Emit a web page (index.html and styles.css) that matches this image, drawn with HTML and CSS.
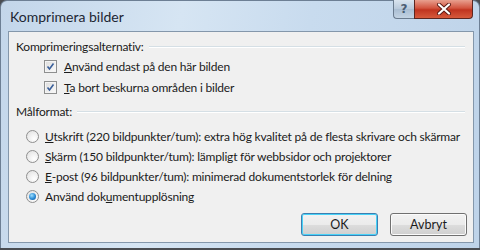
FILE: index.html
```html
<!DOCTYPE html>
<html lang="sv">
<head>
  <meta charset="UTF-8">
  <title>Komprimera bilder</title>
  <link rel="stylesheet" href="styles.css">
</head>
<body>
  <div class="window">
    <div class="titlebar">
      <div class="title">Komprimera bilder</div>
      <div class="caption-btns">
        <div class="cap-help">?</div>
        <div class="cap-close">
          <svg width="16" height="12" viewBox="0 0 16 12">
            <path d="M3 1.5 L13 10.5 M13 1.5 L3 10.5" stroke="#5a1a14" stroke-width="4" stroke-linecap="round"/>
            <path d="M3 1.5 L13 10.5 M13 1.5 L3 10.5" stroke="#fff" stroke-width="2.2" stroke-linecap="round"/>
          </svg>
        </div>
      </div>
    </div>

    <div class="client">
      <div class="group-head head-first">
        <span>Komprimeringsalternativ:</span>
        <div class="etch"></div>
      </div>
      <div class="checks">
        <label class="check-row">
          <span class="checkbox">
            <svg width="13" height="13" viewBox="0 0 13 13">
              <path d="M3.5 6.5 L5.5 9 L9.5 3.5" fill="none" stroke="#3a5f9a" stroke-width="1.6"/>
            </svg>
          </span>
          <span><u>A</u>nvänd endast på den här bilden</span>
        </label>
        <label class="check-row">
          <span class="checkbox">
            <svg width="13" height="13" viewBox="0 0 13 13">
              <path d="M3.5 6.5 L5.5 9 L9.5 3.5" fill="none" stroke="#3a5f9a" stroke-width="1.6"/>
            </svg>
          </span>
          <span><u>T</u>a bort beskurna områden i bilder</span>
        </label>
      </div>

      <div class="group-head head-second">
        <span>Målformat:</span>
        <div class="etch"></div>
      </div>
      <div class="radios">
        <label class="radio-row">
          <span class="radio"></span>
          <span><u>U</u>tskrift (220 bildpunkter/tum): extra hög kvalitet på de flesta skrivare och skärmar</span>
        </label>
        <label class="radio-row">
          <span class="radio"></span>
          <span><u>S</u>kärm (150 bildpunkter/tum): lämpligt för webbsidor och projektorer</span>
        </label>
        <label class="radio-row">
          <span class="radio"></span>
          <span><u>E</u>-post (96 bildpunkter/tum): minimerad dokumentstorlek för delning</span>
        </label>
        <label class="radio-row">
          <span class="radio selected"><span class="dot"></span></span>
          <span>Använd dok<u>u</u>mentupplösning</span>
        </label>
      </div>

      <div class="buttons">
        <button class="btn btn-default">OK</button>
        <button class="btn">Avbryt</button>
      </div>
    </div>
  </div>
</body>
</html>
```

FILE: styles.css
```css
body {
  margin: 0;
  padding: 0;
  background-color: #4a4d52;
  font-family: Lato, 'Open Sans', sans-serif;
  color: #1b1b1b;
  width: 480px;
  height: 250px;
  overflow: hidden;
}

.window {
  width: 480px;
  height: 248px;
  box-sizing: border-box;
  padding: 0 5px 5px 7px;
  border-radius: 7px 7px 0 0;
  background: linear-gradient(100deg, #c3d6ea 0%, #d6e5f3 35%, #c8dbee 60%, #bed3e9 100%);
  border: 1px solid #6d7f94;
  border-bottom: none;
  display: flex;
  flex-direction: column;
}

.titlebar {
  height: 30px;
  display: flex;
  justify-content: space-between;
  align-items: flex-start;
}

.title {
  font-size: 14px;
  color: #1c2633;
  padding: 7px 0 0 2px;
}

.caption-btns {
  display: flex;
  margin-top: -1px;
  margin-right: 1px;
}

.cap-help {
  width: 21px;
  height: 19px;
  box-sizing: border-box;
  border: 1px solid #6a7b8e;
  border-top: none;
  border-right: none;
  border-radius: 0 0 0 4px;
  background: linear-gradient(#d9e4ef, #b8c9db 50%, #a9bdd2 51%, #c3d3e3);
  color: #4a5d73;
  font-family: 'DejaVu Sans', sans-serif;
  font-weight: bold;
  font-size: 12px;
  text-align: center;
  line-height: 18px;
}

.cap-close {
  width: 59px;
  height: 19px;
  box-sizing: border-box;
  border: 1px solid #5c2620;
  border-top: none;
  border-radius: 0 0 4px 0;
  background: linear-gradient(#e8a08f, #d2543f 45%, #c0341f 55%, #d65a3c);
  display: flex;
  align-items: center;
  justify-content: center;
}

.client {
  flex: 1;
  background-color: #f0f0f0;
  border: 1px solid #8497ab;
  padding: 5px 6px 0 7px;
  display: flex;
  flex-direction: column;
  font-size: 12px;
  letter-spacing: -0.2px;
  white-space: nowrap;
}

.group-head {
  display: flex;
  align-items: center;
  gap: 5px;
  height: 19px;
}

.head-second {
  height: 20px;
  margin-top: 4px;
}

.etch {
  flex: 1;
  height: 1px;
  background: #d5dfe5;
  border-bottom: 1px solid #ffffff;
  margin-right: 2px;
  margin-top: 1px;
}

.checks {
  display: flex;
  flex-direction: column;
  gap: 1px;
  padding-left: 28px;
}

.check-row, .radio-row {
  display: flex;
  align-items: center;
  height: 20px;
}

.check-row {
  gap: 7px;
}

.checkbox {
  flex-shrink: 0;
  width: 13px;
  height: 13px;
  box-sizing: border-box;
  border: 1px solid #8e8f8f;
  background: linear-gradient(135deg, #dcdcdc, #fbfbfb);
  box-shadow: inset 0 0 0 1px #f4f4f4;
  display: flex;
}

.checkbox svg {
  margin: -1px;
}

.radios {
  display: flex;
  flex-direction: column;
  margin-top: 5px;
  padding-left: 10px;
}

.radio-row {
  gap: 6px;
}

.radio {
  flex-shrink: 0;
  width: 13px;
  height: 13px;
  box-sizing: border-box;
  border-radius: 50%;
  border: 1px solid #8f8f8f;
  background: radial-gradient(circle at 65% 70%, #ffffff, #e8e8e8 70%, #d4d4d4);
  display: flex;
  align-items: center;
  justify-content: center;
}

.radio .dot {
  width: 7px;
  height: 7px;
  border-radius: 50%;
  background: radial-gradient(circle at 40% 35%, #9fe0ff, #2a8ad4 55%, #0f4f91);
}

.buttons {
  display: flex;
  justify-content: flex-end;
  gap: 12px;
  margin-top: 7px;
}

.btn {
  width: 77px;
  height: 23px;
  font-family: inherit;
  font-size: 12.5px;
  color: #1b1b1b;
  border: 1px solid #707070;
  border-radius: 3px;
  background: linear-gradient(#f2f2f2, #ebebeb 50%, #dddddd 51%, #cfcfcf);
  box-shadow: inset 0 0 0 1px #fbfbfb;
  padding: 0;
}

.btn-default {
  border-color: #3c7fb1;
  box-shadow: inset 0 0 0 1px #48d2f8;
}
```
